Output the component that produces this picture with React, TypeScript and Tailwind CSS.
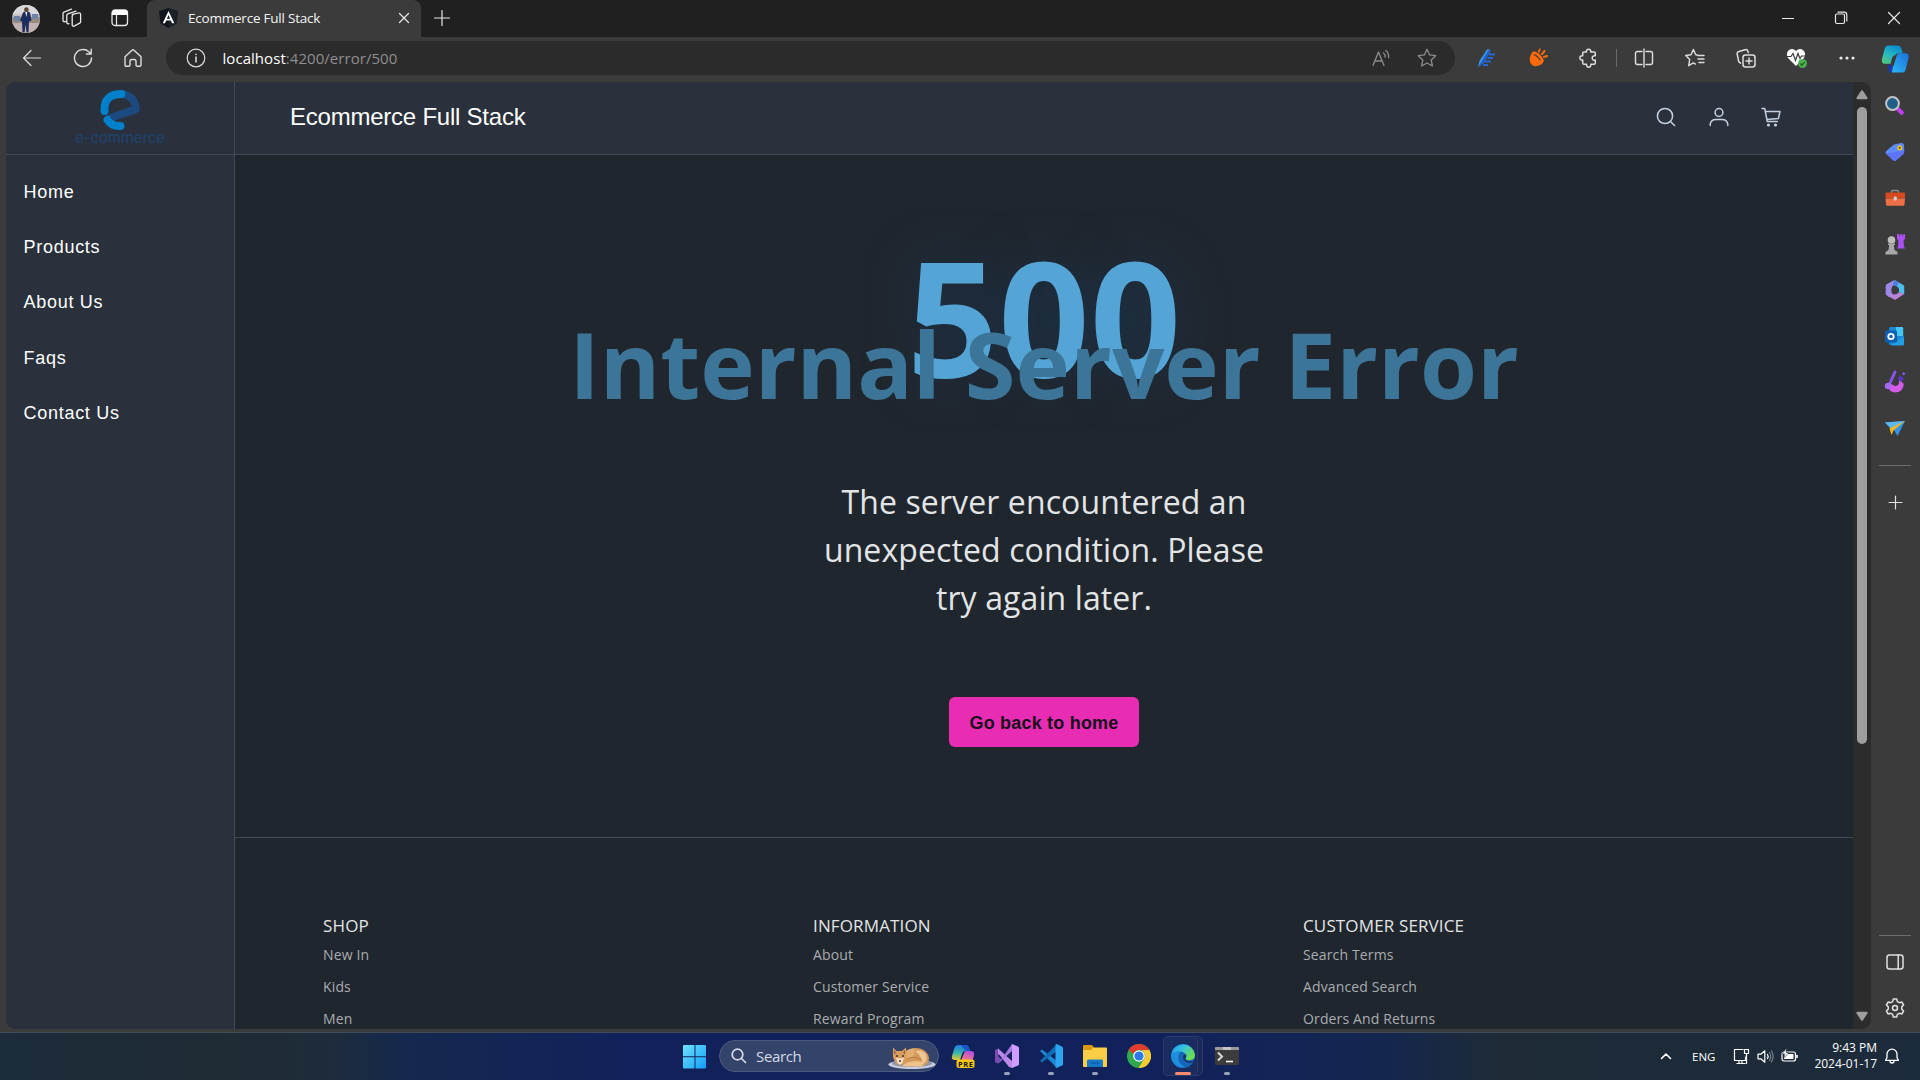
import React from 'react';

type P = { children?: React.ReactNode; c?: string; s?: number; v?: string; w?: number };

const Ico = ({ children, c = '', s = 20, v = '0 0 20 20', w = 1.2 }: P) => (
  <svg width={s} height={s} viewBox={v} fill="none" stroke="currentColor" strokeWidth={w} strokeLinecap="round" strokeLinejoin="round" className={`shrink-0 ${c}`}>
    {children}
  </svg>
);

const Slot = ({ children, c = '' }: { children: React.ReactNode; c?: string }) => (
  <div className={`flex h-full shrink-0 items-center justify-center ${c}`}>{children}</div>
);

function TabStrip() {
  return (
    <div className="flex h-[37px] shrink-0 bg-[#202020] text-[#e8e8e8]">
      <Slot c="w-[52px]">
        <svg width="28" height="28" viewBox="0 0 28 28" className="shrink-0">
          <defs><clipPath id="av"><circle cx="14" cy="14" r="14" /></clipPath></defs>
          <g clipPath="url(#av)">
            <rect width="28" height="28" fill="#c9c2bd" />
            <rect width="28" height="9" fill="#d8d8dc" />
            <rect y="12" width="28" height="6" fill="#9b8a80" />
            <rect y="18" width="28" height="10" fill="#bfb2b0" />
            <path d="M2 11h6v5H2zM20 9h6v5h-6z" fill="#6d84a8" />
            <path d="M11 7.500q3.500-3 7 0l1.500 8-2.500 1-.5 11h-2l-.8-8-1.200 8h-2l-.5-11-2-1z" fill="#1d2c5e" />
            <path d="M13.200 7h2.200l-1 5z" fill="#e6e8f2" />
            <circle cx="14.400" cy="4.600" r="2.300" fill="#5f4438" />
          </g>
        </svg>
      </Slot>
      <Slot c="w-[39px] pb-px">
        <Ico s={20} w={1.300}>
          <path d="M10.300 6.400 17 4.900a1.300 1.300 0 0 1 1.600 1.300v7.600a1.500 1.500 0 0 1-.9 1.400l-5.600 2.900a1.300 1.300 0 0 1-1.900-1.200V8.100a1.700 1.700 0 0 1 1.200-1.700M7 15.600l-.8.200A1.200 1.200 0 0 1 4.800 14.600V7.400a1.700 1.700 0 0 1 1-1.500L14 3.200M3.500 13.500l-1 .2A1.200 1.200 0 0 1 1 12.500V5.600a1.700 1.700 0 0 1 1-1.500L9.500 1.200" />
        </Ico>
      </Slot>
      <Slot c="w-[57px] pb-px">
        <svg width="18" height="18" viewBox="0 0 18 18" className="shrink-0">
          <rect x="1" y="1" width="15.500" height="15.500" rx="3" fill="none" stroke="#e8e8e8" strokeWidth="1.300" />
          <path d="M1 6V4a3 3 0 0 1 3-3h9.500a3 3 0 0 1 3 3v2z" fill="#fff" />
          <path d="M5.500 6v10" stroke="#e8e8e8" strokeWidth="1.200" />
        </svg>
      </Slot>
      <div className="-ml-px flex h-full w-[274px] shrink-0 items-center rounded-t-lg bg-[#3b3b3b] pb-px pl-3">
        <svg width="19" height="20" viewBox="0 0 19 20" className="shrink-0">
          <path d="M9.500 0 19 3.300 17.500 15.500 9.500 20 1.500 15.500 0 3.300z" fill="#10141c" />
          <path d="M9.500 0 19 3.300 17.500 15.500 9.500 20z" fill="#1b2029" />
          <path d="M9.500 3 15.300 15.300H13l-1.200-2.900H7.200L6 15.300H3.700zM9.500 7l-1.600 3.700h3.200z" fill="#fff" />
        </svg>
        <div className="ml-[10px] w-[210px] whitespace-nowrap font-['Open_Sans',sans-serif] text-[13.500px] leading-5 tracking-[-0.22px] text-[#f4f4f4]">Ecommerce Full Stack</div>
        <Ico s={12} v="0 0 12 12"><path d="m1.500 1.500 9 9M10.500 1.500l-9 9" /></Ico>
      </div>
      <Slot c="ml-[11px] w-[20px] pb-px"><Ico s={18} v="0 0 18 18"><path d="M9 1.500v15M1.500 9h15" /></Ico></Slot>
      <div className="flex-1" />
      <Slot c="w-[53px] pb-px"><Ico s={12} v="0 0 12 12"><path d="M.5 6.500h11" /></Ico></Slot>
      <Slot c="w-[53px] pb-px"><Ico s={14} v="0 0 14 14"><rect x="1.500" y="3" width="9" height="9.500" rx="1.500" /><path d="M4 1.200h6a2.800 2.800 0 0 1 2.800 2.800v6" /></Ico></Slot>
      <Slot c="w-[53px] pb-px"><Ico s={14} v="0 0 14 14"><path d="m1.500 1.500 11 11M12.500 1.500l-11 11" /></Ico></Slot>
    </div>
  );
}

function Toolbar() {
  return (
    <div className="flex h-[45px] shrink-0 items-start pt-1 text-[#dedede]">
      <div className="flex h-[34px] w-full">
        <Slot c="ml-[7px] w-[50px]"><Ico s={20}><path d="M1.500 10h17M9 2.500 1.500 10 9 17.500" /></Ico></Slot>
        <Slot c="w-[51px]"><Ico s={20} w={1.400}><path d="M18.500 10a8.500 8.500 0 1 1-2.700-6.200L18 6M18.200 1.200V6h-4.800" /></Ico></Slot>
        <Slot c="w-[50px]"><Ico s={20} w={1.400}><path d="M2 8.800 9 2.200a1.500 1.500 0 0 1 2 0l7 6.600v8.200a1.300 1.300 0 0 1-1.300 1.300h-2.400a1.300 1.300 0 0 1-1.300-1.300V13a1.500 1.500 0 0 0-1.500-1.500h-3A1.500 1.500 0 0 0 7 13v4a1.300 1.300 0 0 1-1.300 1.300H3.300A1.300 1.300 0 0 1 2 17z" /></Ico></Slot>
        <div className="ml-2 flex h-[34px] w-[1289px] shrink-0 items-center rounded-full bg-[#2b2b2b]">
          <Ico s={20} c="ml-5 mr-4"><circle cx="10" cy="10" r="8.800" /><path d="M10 9v5M10 6.300v.2" strokeWidth="1.500" /></Ico>
          <div className="flex-1 whitespace-nowrap pl-[0.5px] font-['Open_Sans',sans-serif] text-[15px] leading-5 tracking-[0.05px] text-[#8e8e8e]"><span className="text-white">localhost</span>:4200/error/500</div>
          <Slot c="w-[44px] text-[#8c8c8c]">
            <Ico s={20} w={1.300}><path d="M2 17.500 7.500 4 13 17.500M4 13h7M12.500 5q1.800 1.500 1.600 4.200M14.800 2.500q3.200 2.700 2.800 7" /></Ico>
          </Slot>
          <Slot c="w-[48px] text-[#8c8c8c]">
            <Ico s={20} w={1.300}><path d="m10 1.300 2.600 5.600 6.100.8-4.500 4.200 1.200 6.100-5.400-3-5.400 3 1.200-6.100L1.300 7.700l6.100-.8z" /></Ico>
          </Slot>
          <div className="w-1" />
        </div>
        <Slot c="ml-[6px] w-[51px]">
          <svg width="20" height="20" viewBox="0 0 20 20"><path d="M12 6.500h6M10.500 10h5.500M8 13.500h6M6 17h5" stroke="#2569d4" strokeWidth="1.800" /><path d="m1 19 1.500-6L10 1.500q2-.8 3.500 1L6.500 15z" fill="#3b9af0" /><path d="m1 19 5.500-4L13.500 2.500l-2-.5L3.500 15z" fill="#1c5fd0" /></svg>
        </Slot>
        <Slot c="w-[51px]">
          <svg width="20" height="20" viewBox="0 0 20 20"><path d="M3 6Q1 10 2 14q2 5 7 4 6-1 7-6z" fill="#ff6a0a" /><ellipse cx="9.500" cy="9.500" rx="7.500" ry="3.800" transform="rotate(45 9.500 9.500)" fill="#ff6a0a" /><path d="M6 6.500q3 1 6.500 6" stroke="#3b3b3b" strokeWidth="1.300" fill="none" /><path d="M11 3.500 11.800 1.500M14 6 16.500 3M16 9l3-1" stroke="#ff6a0a" strokeWidth="2" strokeLinecap="round" /></svg>
        </Slot>
        <Slot c="w-[50px]">
          <Ico s={20} w={1.500}><path d="M6 4h2.500a2.200 2.200 0 1 1 4.200 0H16a1.300 1.300 0 0 1 1.300 1.300v2.500a2.300 2.300 0 1 0 0 4.300V15a1.300 1.300 0 0 1-1.300 1.300h-3.200a2.200 2.200 0 1 1-4.200 0H6A1.300 1.300 0 0 1 4.700 15v-3a2.200 2.200 0 1 1 0-4.200V5.300A1.300 1.300 0 0 1 6 4z" /></Ico>
        </Slot>
        <div className="ml-[3px] mt-2 h-[18px] w-px shrink-0 bg-[#6a6a6a]" />
        <Slot c="ml-px w-[51px]"><Ico s={20} w={1.400}><path d="M8 3.500H3.500a2 2 0 0 0-2 2v9a2 2 0 0 0 2 2H8M12 3.500h4.500a2 2 0 0 1 2 2v9a2 2 0 0 1-2 2H12M10 1v18" /></Ico></Slot>
        <Slot c="w-[51px]"><Ico s={20} w={1.400}><path d="M12.500 7 10.800 6.700 8.400 1.500 6 6.700l-5.300.8 4 4-1 6.200 4.700-2.800 2 1.200M13 7.500h6M13 11h6M14 14.500h5" /></Ico></Slot>
        <Slot c="w-[51px]"><Ico s={20} w={1.500}><rect x="7" y="7" width="12" height="12" rx="2.500" /><path d="M13 10v6M10 13h6M4.500 15.200 3.800 14.700A2.500 2.500 0 0 1 2.600 13L1.200 6.200a2.300 2.300 0 0 1 1.700-2.700l6.300-1.800a2.300 2.300 0 0 1 2.700 1.500l.3 1.300" /></Ico></Slot>
        <Slot c="w-[51px]">
          <svg width="22" height="20" viewBox="0 0 22 20"><path d="M10 18 2 10Q-.5 5.500 2.500 2.500 6.500-.5 10 3q3.500-3.500 7.500-.5 3 3 .5 7.500z" fill="#fff" /><path d="M0 8.500h5l2-3 2.500 7 2.500-7 2 5 1.500-2.500h4" stroke="#3b3b3b" strokeWidth="1.200" fill="none" /><circle cx="16.500" cy="15.500" r="4.500" fill="#4caf50" /><path d="m14.300 15.500 1.600 1.600 2.800-3" stroke="#1f5a24" strokeWidth="1.200" fill="none" /></svg>
        </Slot>
        <Slot c="w-[49px]">
          <svg width="16" height="4" viewBox="0 0 16 4" fill="#e8e8e8"><circle cx="2" cy="2" r="1.600" /><circle cx="8" cy="2" r="1.600" /><circle cx="14" cy="2" r="1.600" /></svg>
        </Slot>
        <Slot c="w-[48px] pt-[2px]">
          <svg width="29" height="30" viewBox="0 0 30 30">
            <defs>
              <linearGradient id="cp1" x1="0" y1="1" x2=".6" y2="0"><stop offset="0" stopColor="#58c96e" /><stop offset=".5" stopColor="#28b9c0" /><stop offset="1" stopColor="#0a8fd0" /></linearGradient>
              <linearGradient id="cp2" x1="1" y1="0" x2="0" y2="1"><stop offset="0" stopColor="#1c6fd8" /><stop offset="1" stopColor="#2ab8f8" /></linearGradient>
            </defs>
            <path d="M7 1h10q3 0 4 3l1.500 5H18q-2.500 0-3.200 2.500L12 20H4q-4 0-3-5L4 4q.8-3 3-3z" fill="url(#cp1)" />
            <path d="M12 24 16 11.500Q16.800 9 19.500 9H25q4.500 0 3.500 5l-3 12q-.8 3-4 3H11q1-2 1-5z" fill="url(#cp2)" />
            <path d="M7.500 20.500h5.200L11 27q-.4 2-1 2-2 0-2-3z" fill="#1738c0" />
            <path d="M14.200 11 17 9.200l-4.200 13h-3.600l2.300-8.500q.7-2.200 2.700-2.700z" fill="#3b3b3b" />
          </svg>
        </Slot>
      </div>
    </div>
  );
}

function Logo() {
  return (
    <div className="flex h-[72px] flex-col items-center">
      <svg width="42" height="42" viewBox="0 0 42 42" fill="none" className="mt-[7px] shrink-0">
        <path d="M21 5q15 1 16 15L8 30" stroke="#1b4a80" strokeWidth="7.500" strokeLinejoin="round" />
        <path d="M33 18 12 26l-1 4 3 2 24-8z" fill="#1b4a80" />
        <path d="M5.500 22Q4.500 5 22.500 5" stroke="#0180cc" strokeWidth="8" strokeLinecap="round" />
        <path d="M8.500 31q4 6.500 13 6" stroke="#0180cc" strokeWidth="8" strokeLinecap="round" />
      </svg>
      <div className="-mt-px font-['Inter',sans-serif] text-[15px] leading-4 tracking-[-0.15px] text-[#1d4470]">e-commerce</div>
    </div>
  );
}

const NAV = ['Home', 'Products', 'About Us', 'Faqs', 'Contact Us'];

const COLS = [
  { t: 'SHOP', i: ['New In', 'Kids', 'Men'] },
  { t: 'INFORMATION', i: ['About', 'Customer Service', 'Reward Program'] },
  { t: 'CUSTOMER SERVICE', i: ['Search Terms', 'Advanced Search', 'Orders And Returns'] },
];

function WebPage() {
  return (
    <div className="ml-[6px] flex h-[947px] w-[1865px] shrink-0 overflow-hidden rounded-[10px] bg-[#20262d] font-['Liberation_Sans',Arial,sans-serif]">
      <aside className="flex w-[229px] shrink-0 flex-col border-r border-[#414b58] bg-[#2a313c]">
        <div className="h-[73px] shrink-0 border-b border-[#414b58]"><Logo /></div>
        <nav className="flex flex-col pl-[17.500px] pt-[9.500px]">
          {NAV.map((n) => (
            <a key={n} className="flex h-[55.300px] items-center text-[18px] tracking-[0.72px] text-white">{n}</a>
          ))}
        </nav>
      </aside>
      <div className="flex w-[1618px] shrink-0 flex-col">
        <header className="flex h-[73px] shrink-0 items-center border-b border-[#414b58] bg-[#2a313c] pb-[2px] pl-[55px] text-[#c3d0e2]">
          <h2 className="flex-1 text-[24px] leading-8 tracking-[-0.23px] text-white">Ecommerce Full Stack</h2>
          <Slot c="w-[52px]"><Ico s={20} w={1.500}><circle cx="9" cy="9" r="7.600" /><path d="m14.500 14.500 4.500 4.500" strokeLinecap="butt" /></Ico></Slot>
          <Slot c="w-[53px]"><Ico s={20} w={1.500}><circle cx="10" cy="5.500" r="3.900" /><path d="M1.200 18.500v-1.300q.8-4.700 5.800-4.700h6q5 0 5.800 4.700v1.300" /></Ico></Slot>
          <Slot c="mr-[56px] w-[52px]"><Ico s={20} w={1.500}><path d="M1 1.500h2.700l2.600 13h10M4.500 4.500H19l-1.600 7-11.500 1" /><circle cx="7.500" cy="18" r=".8" /><circle cx="14.500" cy="18" r=".8" /></Ico></Slot>
        </header>
        <main className="flex h-[682px] shrink-0 flex-col items-center pt-20 font-['Open_Sans',sans-serif]">
          <div className="text-[160px] font-bold leading-[160px] text-[#54a5d5] [text-shadow:0_0_56px_rgba(25,75,125,0.4)]">500</div>
          <h1 className="z-10 -mt-[78px] whitespace-nowrap text-[92.160px] font-bold leading-[92px] text-[#3c7597]">Internal Server Error</h1>
          <p className="mt-[69px] w-[460px] text-center text-[32px] leading-[48px] tracking-[0.1px] text-[#e3e4e6]">The server encountered an unexpected condition. Please try again later.</p>
          <button className="mt-[75px] h-[50px] w-[190px] rounded-md bg-[#e82db4] pt-[2px] font-['Liberation_Sans',Arial,sans-serif] text-[18px] font-bold tracking-[0.2px] text-[#16101a]">Go back to home</button>
        </main>
        <footer className="grid grow grid-cols-[490px_490px_490px] border-t border-[#414b58] pl-[88px] pt-[73px] font-['Open_Sans',sans-serif]">
          {COLS.map((c) => (
            <div key={c.t} className="flex flex-col whitespace-nowrap">
              <div className="h-[28px] text-[17px] leading-[30px] tracking-[0.14px] text-[#e3e4e6]">{c.t}</div>
              {c.i.map((x) => (
                <div key={x} className="h-8 text-[14px] leading-8 tracking-[0.14px] text-[#a9acb0]">{x}</div>
              ))}
            </div>
          ))}
        </footer>
      </div>
      <div className="flex w-[18px] shrink-0 flex-col items-center bg-[#2c2c2c] pt-2">
        <svg width="12" height="10" viewBox="0 0 12 10"><path d="M5 .8q1-1.200 2 0l4.500 7q.5 1.400-1 1.400h-9q-1.500 0-1-1.400z" fill="#9e9e9e" /></svg>
        <div className="mt-[7px] h-[637px] w-[10px] rounded-full bg-[#9e9e9e]" />
        <div className="flex-1" />
        <svg width="12" height="10" viewBox="0 0 12 10" className="mb-2"><path d="M5 9.200q1 1.200 2 0l4.500-7q.5-1.400-1-1.400h-9q-1.500 0-1 1.400z" fill="#9e9e9e" /></svg>
      </div>
    </div>
  );
}

const G = ({ children }: { children: React.ReactNode }) => (
  <div className="flex h-[46px] shrink-0 items-center justify-center">
    <svg width="20" height="20" viewBox="0 0 20 20" className="overflow-visible">{children}</svg>
  </div>
);

function EdgeSidebar() {
  return (
    <div className="flex w-12 shrink-0 flex-col items-center pt-px text-[#e0e0e0]">
      <G><path d="m12 12 6 6" stroke="#c23cf0" strokeWidth="4" strokeLinecap="butt" /><circle cx="7.500" cy="7.500" r="6.400" fill="#1d5f86" stroke="#c4c4c4" strokeWidth="2" /></G>
      <G><path d="M9 2.500 16 1q3-.3 3 2.500l.3 6q0 2-1.500 3L11 18.500q-1.500 1.200-3-.3L1.200 12q-1.500-1.500 0-3z" fill="#5d8bfa" /><path d="m1 11.500 18-3q.3 3-1.200 4L11 18.500q-1.500 1.200-3-.3z" fill="#5f6cf8" opacity=".7" /><circle cx="14.700" cy="5.700" r="1.800" stroke="#f5c518" strokeWidth="1.500" fill="#4a4a20" /></G>
      <G><path d="M6.500 5V3.800Q6.500 2.500 8 2.500h4q1.500 0 1.500 1.300V5" stroke="#8a8a8a" strokeWidth="1.500" fill="none" /><rect x=".5" y="4.500" width="19.500" height="6" rx="1" fill="#d44a1c" /><path d="M.5 10.500H20l-.5 6.300q0 1-1 1H2q-1 0-1-1z" fill="#ee6f45" /><rect x="8.800" y="8.500" width="3" height="4" rx="1" fill="#d0d0d0" /></G>
      <G><path d="M12 0h2v1.500h1.200V0h2v1.500h1.200V0H20v5l-1.500 1.500.5 6 1 2h-8l1-2 .5-6L12 5z" fill="#a94ff5" /><circle cx="6.500" cy="6" r="3.800" fill="#bdbdbd" /><path d="M3 9.500h7v1.500H8.800L9.500 16l3 2v2.500H.5V18l3-2 .7-5H3z" fill="#a8a8a8" /></G>
      <G>
        <path d="M9.500 0 1.500 4.300Q.7 5 .7 6v8.500L4 17l4.500-2.500Q6 13 6.200 9.500 6.500 6 9.500 4z" fill="#9c86e6" />
        <path d="M9.500 0 18.300 5q.9.600.9 1.600v7.900L14 12V9.500q0-2-2-3L8 5l1.500-1z" fill="#4cc0ee" />
        <path d="M9.500 0 14 2.600 12 6.500 8 5z" fill="#4f7be0" />
        <path d="m19.200 14-8.300 5.500q-.9.500-1.800 0L2 15.500 8.500 14.500q3 .5 5.500-2.500z" fill="#b983d8" />
      </G>
      <G><rect x="4" y="1" width="14" height="18" rx="1.500" fill="#1a8ad8" /><path d="M11 1h6q1.200 0 1.200 1.200V10H11z" fill="#45c8f5" /><path d="M6 19.500 19 10v8.500q0 1-1 1z" fill="#1f9fe6" /><rect x="0" y="4.500" width="12" height="12" rx="1.200" fill="#0f5fb0" /><circle cx="6" cy="10.500" r="2.700" fill="none" stroke="#fff" strokeWidth="1.800" /></G>
      <G><path d="M3 14Q4 20.500 10.500 20.500q8-.8 8.300-8.500L15 8l-1 1q.5 4.500-3.500 5Q8 14 7 12z" fill="#d45ae8" /><path d="M10 0 5 11" stroke="#8855e8" strokeWidth="3" strokeLinecap="round" /><circle cx="3" cy="14" r="3.200" fill="#a06af5" /><path d="m15 3.500 4 3-3 3.500-3.500-3z" fill="#5a35c8" /><path d="m18.500 0 2 1.800-2 1.700-1.300-1.700z" fill="#8a58f0" /></G>
      <G><path d="M0 4.500 20 3 12.500 18 9 12z" fill="#2f93e8" /><path d="M0 4.500 20 3 6 11z" fill="#5ab8f2" /><path d="M4.500 10.500 20 3 8.500 12.500 6.500 17z" fill="#f5b81c" /></G>
      <div className="mt-[14px] h-px w-8 bg-[#6c6c6c]" />
      <div className="mt-[29px] flex"><Ico s={15} v="0 0 15 15"><path d="M7.500 1v13M1 7.500h13" /></Ico></div>
      <div className="flex-1" />
      <div className="h-px w-8 bg-[#6c6c6c]" />
      <div className="mt-[17px] flex"><Ico s={18} v="0 0 18 18" w={1.500}><rect x="1" y="2" width="16" height="14" rx="2.500" /><path d="M12.200 2v14" /></Ico></div>
      <div className="mb-[14px] mt-[27px] flex">
        <Ico s={20} w={1.500}><circle cx="10" cy="10" r="2.500" /><path d="m8.300 1-.6 2.600-2 1.100L3.200 4 1.400 7l1.900 1.900v2.200L1.400 13l1.800 3 2.500-.7 2 1.100.6 2.600h3.400l.6-2.600 2-1.100 2.500.7 1.800-3-1.900-1.900V8.900L18.600 7l-1.800-3-2.500.7-2-1.100L11.700 1z" /></Ico>
      </div>
    </div>
  );
}

const TaskApp = ({ children, dot }: { children: React.ReactNode; dot?: boolean }) => (
  <div className="flex h-full w-[44px] shrink-0 flex-col items-center pt-[11px]">
    <svg width="24" height="24" viewBox="0 0 24 24" className="shrink-0">{children}</svg>
    {dot && <div className="mt-[4px] h-[3px] w-[6px] rounded-full bg-[#9aa3b8]" />}
  </div>
);

function Taskbar() {
  return (
    <div className="flex h-[48px] shrink-0 items-start border-t border-[#414a58] bg-[linear-gradient(90deg,#1c2c39_0%,#1f2b35_12%,#1e2c3a_17%,#15284e_21%,#11225a_32%,#11225a_62%,#14264f_72%,#1e2b37_78%,#1c2b3b_100%)] text-white">
      <div className="ml-[683px] mt-[12px] shrink-0">
        <svg width="24" height="24" viewBox="0 0 24 24">
          <defs><linearGradient id="wn" x1="0" y1="0" x2="1" y2="1"><stop offset="0" stopColor="#6fe4fd" /><stop offset="1" stopColor="#119cf8" /></linearGradient></defs>
          <path d="M1 0h10.500v11.300H0V1q0-1 1-1zM12.500 0H22q1 0 1 1v10.300H12.500zM0 12.300h11.500V23.500H1q-1 0-1-1zM12.500 12.300H23v10.200q0 1-1 1h-9.500z" fill="url(#wn)" />
        </svg>
      </div>
      <div className="ml-[12px] mt-[7px] flex h-[32px] w-[220px] shrink-0 items-center rounded-full border border-[#4c5b80] bg-[#334369] pl-[11px]">
        <Ico s={16} v="0 0 16 16" w={1.700} c="text-[#d8dce8]"><circle cx="6.500" cy="6.500" r="5.300" /><path d="m10.500 10.500 4 4" /></Ico>
        <span className="ml-[9px] w-[132px] pb-px font-['Open_Sans',sans-serif] text-[15px] leading-5 tracking-[-0.35px] text-[#d5dae6]">Search</span>
        <svg width="49" height="24" viewBox="0 0 49 24" className="mt-[3px]">
          <ellipse cx="24" cy="18.500" rx="23.500" ry="4.500" fill="#c9ccdc" />
          <ellipse cx="24" cy="17.500" rx="20" ry="3.500" fill="#8f93a8" />
          <path d="M15 8Q23 0 32 2.500q8 2.500 9 9.500 0 6-6 8H18q-8-2-3-12z" fill="#d69a5c" />
          <path d="M17 6q4-4 9-3.500 2 5-2 9-4 2-7 0z" fill="#e3ae72" />
          <path d="M27 5q8-2 11 4 2 6-3 9-1-8-8-13z" fill="#edc795" />
          <path d="m5 1.500 3.500 3.500h5.500L18 1.500l.5 7.500Q18 17 12 19q-5-1-7-8z" fill="#d99d5e" />
          <path d="m6.300 4 1.700 3-2 1zM16.800 4l-1.600 3 2 1z" fill="#8c5a34" />
          <path d="M8 11.500q4 2 8 0l-2 6q-2 2-4 0z" fill="#f3e3cf" />
          <path d="M14 19.500q8-6 22-3.500l-2 4.500H17z" fill="#efc28b" />
          <path d="M19 13q8-4 14 1" stroke="#b87a40" strokeWidth="1" fill="none" />
          <path d="M8 10h2M14 10h2M11 15h2" stroke="#4a3020" strokeWidth="1.300" />
        </svg>
      </div>
      <div className="ml-[2px] flex h-full">
        <TaskApp>
          <defs>
            <linearGradient id="pr1" x1=".4" y1="0" x2=".3" y2="1"><stop offset="0" stopColor="#2379e0" /><stop offset=".5" stopColor="#2fb4b0" /><stop offset="1" stopColor="#e6c832" /></linearGradient>
            <linearGradient id="pr2" x1=".7" y1="0" x2=".3" y2="1"><stop offset="0" stopColor="#b04fe0" /><stop offset="1" stopColor="#f57a7a" /></linearGradient>
          </defs>
          <path d="M7 1h8q2 0 3 3l1 3h-5q-2 0-2.600 2L9 16H4q-4 0-3-4l2.500-8Q4.500 1 7 1z" fill="url(#pr1)" />
          <path d="M15 7h5q4 0 3 4.500L21.500 17H10l3-8q.8-2 2-2z" fill="url(#pr2)" />
          <path d="M10 1h5q2 0 3 3l1 3h-3q-2 0-3-2z" fill="#1a55c8" />
          <rect x="5.500" y="15.500" width="18" height="8.500" rx="2" fill="#f5c518" /><text x="7" y="22.600" fontSize="7.500" fontWeight="700" fill="#1a1a1a" fontFamily="Open Sans, sans-serif" textLength="15">PRE</text>
        </TaskApp>
        <TaskApp dot>
          <path d="m0 6 3-1.500 4 3.500L3 12l4 4-4 3.500L0 18z" fill="#7a4cb0" /><path d="m3 4.500 14 12.500V24l-3-1L3 9z" fill="#b98ae8" /><path d="M17 0v7L3 19.500 7 14.500z" fill="#a878e0" /><path d="m17 0 6 2.500q1 .5 1 1.500v16q0 1-1 1.500L17 24z" fill="#cf9dff" />
        </TaskApp>
        <TaskApp dot>
          <path d="m1 7 2-1.500L18 17v7z" fill="#1c86cf" /><path d="m1 17 2 1.500L18 7V0z" fill="#0f6db5" /><path d="m17.500 0 5.500 2.500q1 .5 1 1.500v16q0 1-1 1.500L17.500 24q-1-.3-1-1V1q0-.8 1-1z" fill="#2aa5f0" />
        </TaskApp>
        <TaskApp dot>
          <path d="M1.200 1H9l2 2.500V8H0V2.200Q0 1 1.200 1z" fill="#d99a10" /><path d="M0 6h8l2.500-2.500H23q1 0 1 1V22q0 1-1 1H1q-1 0-1-1z" fill="#fcce48" /><path d="M4 23v-6q0-1.500 1.500-1.500h13Q20 15.500 20 17v6z" fill="#1478c8" /><path d="M8 19h8" stroke="#0c5a9c" strokeWidth="1.300" />
        </TaskApp>
        <TaskApp>
          <circle cx="12" cy="12" r="12" fill="#2fa84f" /><path d="M12 0a12 12 0 0 1 10.400 6H12a6 6 0 0 0-5.600 4L1.600 6A12 12 0 0 1 12 0z" fill="#e33b2e" /><path d="M22.400 6A12 12 0 0 1 11.500 24l5.700-9a6 6 0 0 0 0-6L15 6z" fill="#fcc934" /><circle cx="12" cy="12" r="5.800" fill="#fff" /><circle cx="12" cy="12" r="4.600" fill="#2f78ea" />
        </TaskApp>
        <div className="relative h-full w-[44px] shrink-0">
          <div className="absolute left-[4px] top-[3px] h-[40px] w-[38px] rounded-[5px] border border-[#2a3968] bg-[#182859]" />
          <div className="absolute left-[2px] top-[3px] h-[40px] w-[35px] rounded-[5px] border border-[#2c3b6a] bg-[#1a2b60]" />
          <div className="relative flex flex-col items-center pt-[11px]">
            <svg width="24" height="24" viewBox="0 0 24 24">
              <defs>
                <linearGradient id="ed" x1="0" y1="0" x2="1" y2=".5"><stop offset="0" stopColor="#1c9be8" /><stop offset=".5" stopColor="#35c2e0" /><stop offset="1" stopColor="#6be04c" /></linearGradient>
              </defs>
              <circle cx="12" cy="12" r="12" fill="#1565b8" />
              <path d="M.2 10.500A12 12 0 0 1 24 11q0 5-5.500 5.200-3.500 0-4.200-1.500 2-2.200.2-4.800Q12 7 7.500 7.500 3 8 .2 10.500z" fill="url(#ed)" />
              <path d="M.2 10.500Q4 6.500 9.500 8q-3 3-2 7.500 1.500 5.500 7 8Q4 24.500.8 16-.2 13 .2 10.500z" fill="#1f8fdc" />
              <path d="M14.300 14.700q1 2.800 5.500 2.500 2 0 3.500-1l-1 1.800q-4.500 2-8-.5-3.500-3-1.500-6.500 2-1.500 2.500.5.300 1.500-1 3.200z" fill="#1a2b60" opacity=".85" />
            </svg>
            <div className="mt-[4px] h-[3px] w-4 rounded-full bg-[#f98b6c]" />
          </div>
        </div>
        <TaskApp dot>
          <rect x="0" y="3" width="24" height="18" rx="1" fill="#3c3c3c" /><path d="M0 6V4q0-1 1-1h22q1 0 1 1v2z" fill="#9a9a9a" /><path d="M8 3h8v3H8z" fill="#c4c4c4" /><path d="m3 8.500 4 4-4 4" stroke="#d8d8d8" strokeWidth="2" fill="none" /><path d="M11 17.500h7" stroke="#fff" strokeWidth="1.600" />
        </TaskApp>
      </div>
      <div className="flex-1" />
      <div className="flex h-[46px] shrink-0 items-center font-['Open_Sans',sans-serif]">
        <Ico s={12} v="0 0 12 12" w={1.600}><path d="M1.500 8.500 6 4l4.500 4.500" /></Ico>
        <span className="ml-[20px] w-[41px] pt-[2px] text-[11.500px] leading-4">ENG</span>
        <Ico s={17} v="0 0 17 17" w={1.200}><path d="M10 1.500H1.500v11h11V9M4 15.500h8M6 12.500v3M9 12.500v3M11.500 1.500h4v4h-4zM13.500 5.500v10" /></Ico>
        <Ico s={17} v="0 0 17 17" w={1.200} c="ml-[7px]"><path d="M1 6.200v4.600h2.800l4 3.400V2.800l-4 3.400zM10.500 6.500q1.300 2 0 4" /><path d="M12.500 4.500q2.500 4 0 8M14.500 3q3.200 5.500 0 11" opacity=".4" /></Ico>
        <svg width="17" height="17" viewBox="0 0 17 17" className="-mt-[2px] ml-[7px] shrink-0"><rect x="1" y="5" width="13.500" height="9" rx="2" fill="none" stroke="#fff" strokeWidth="1.200" /><rect x="3" y="7" width="9.500" height="5" fill="#fff" /><path d="M16 8v3" stroke="#fff" strokeWidth="1.600" /><path d="M5.500 1 1 7h3l-1.500 4.500L8 5.500H5z" fill="#fff" stroke="#1d2b39" strokeWidth=".6" /></svg>
        <div className="ml-[10px] w-[69px] whitespace-nowrap text-right text-[12px] leading-4"><div>9:43 PM</div><div>2024-01-17</div></div>
        <Ico s={16} v="0 0 16 16" w={1.300} c="ml-[7px] mr-[20px]"><path d="M8 1.200a5 5 0 0 0-5 5v3.300L1.600 12.300h12.800L13 9.500V6.200a5 5 0 0 0-5-5zM6 13a2 2 0 0 0 4 0" /></Ico>
      </div>
    </div>
  );
}

export default function App() {
  return (
    <div className="flex h-[1080px] w-[1920px] flex-col overflow-hidden bg-[#3b3b3b]">
      <TabStrip />
      <Toolbar />
      <div className="flex h-[950px] shrink-0">
        <WebPage />
        <EdgeSidebar />
      </div>
      <Taskbar />
    </div>
  );
}
